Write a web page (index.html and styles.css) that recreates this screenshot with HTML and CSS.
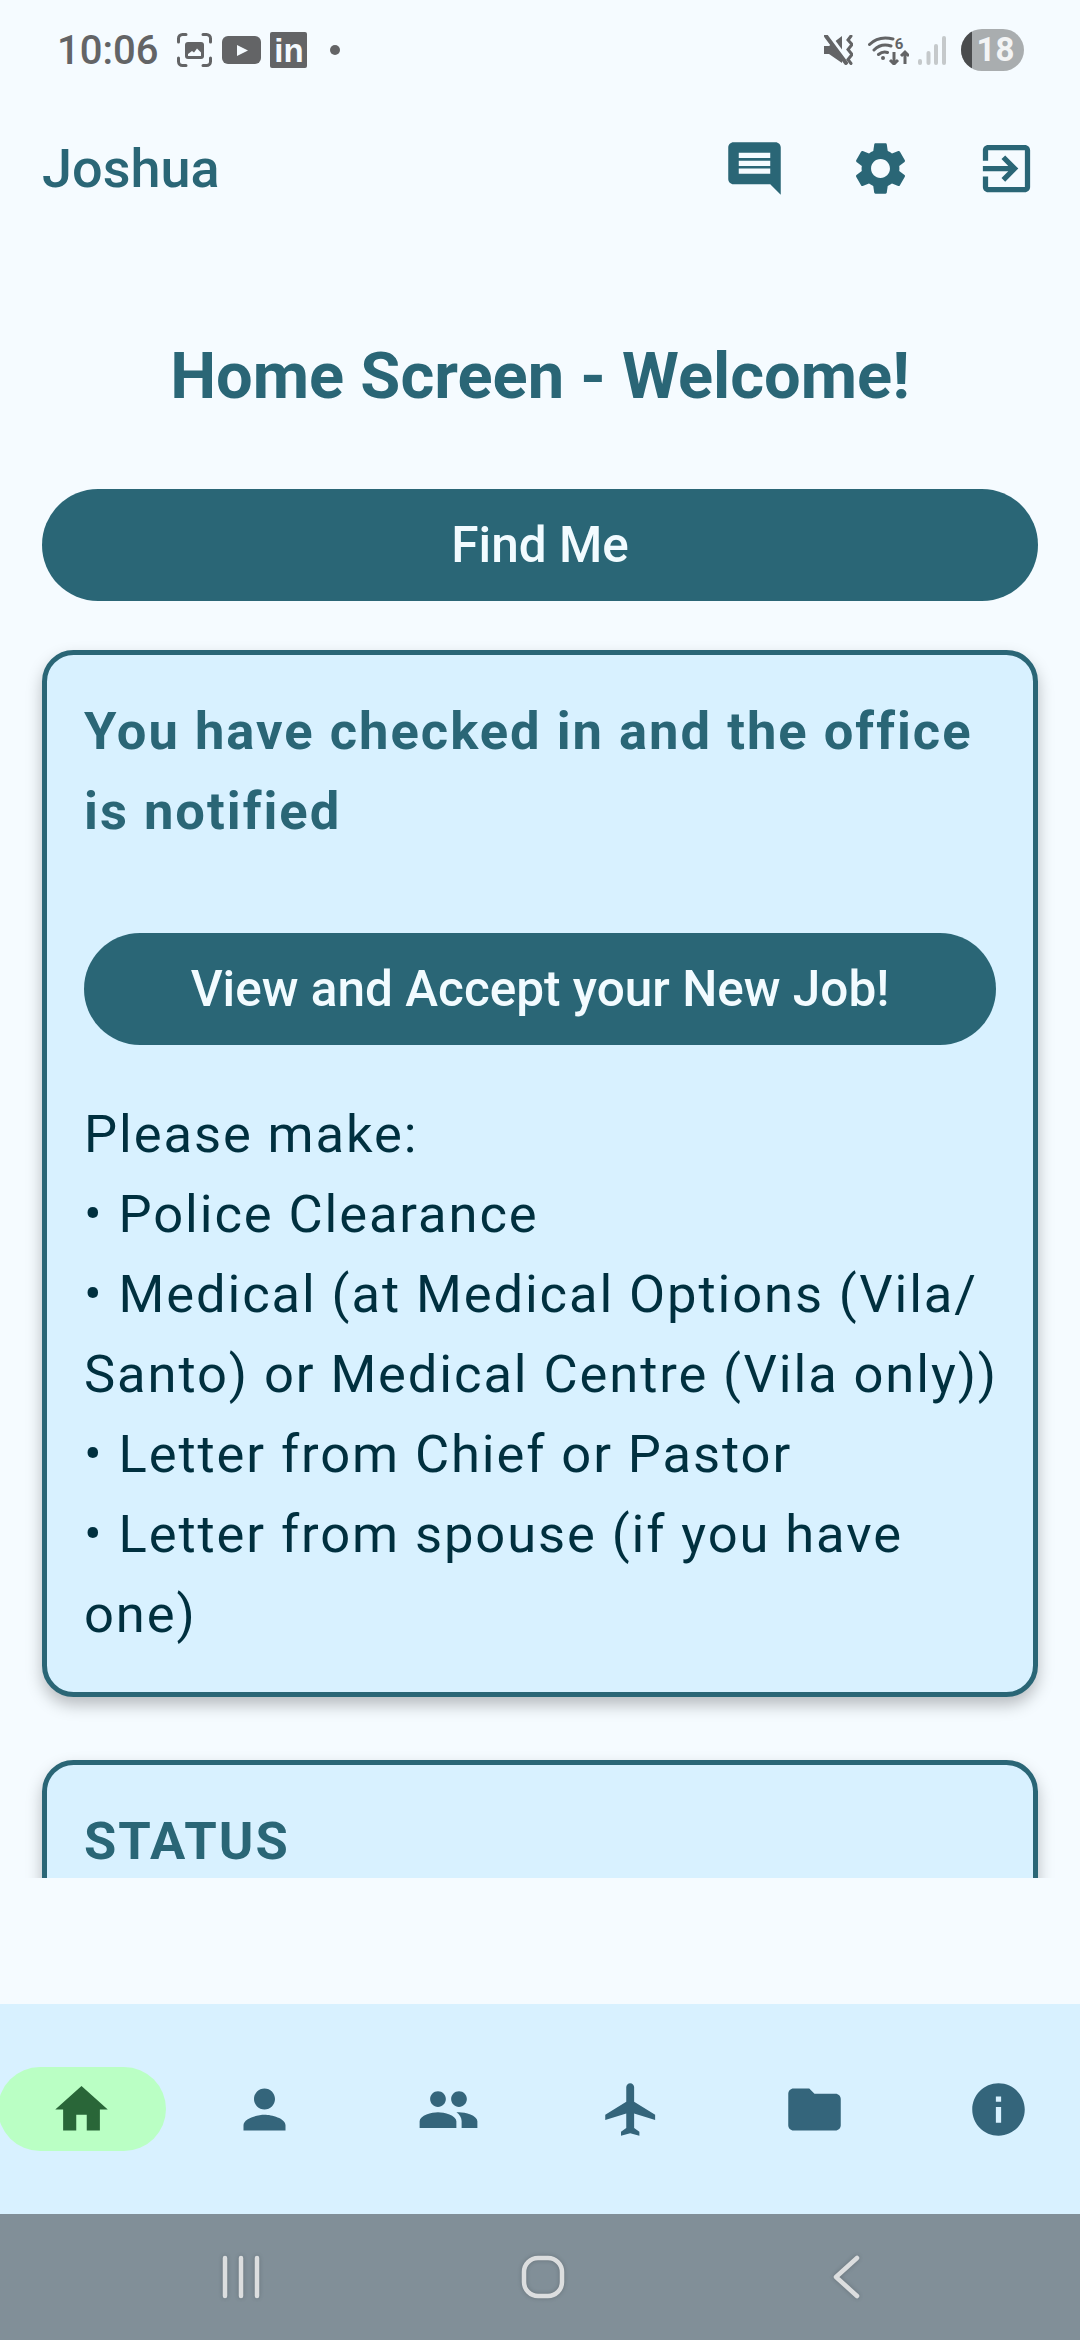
FILE: index.html
```html
<!DOCTYPE html>
<html lang="en">
<head>
    <meta charset="UTF-8">
    <meta name="viewport" content="width=device-width, initial-scale=1.0">
    <title>Home Screen</title>
    <link rel="stylesheet" href="styles.css">
</head>
<body>
<div class="page">

    <!-- status bar -->
    <div class="status-bar">
        <div class="status-left">
            <span class="clock">10:06</span>
            <svg class="st-shot" width="35" height="34" viewBox="0 0 35 34">
                <path class="corner" d="M1.500 9V5.500a4 4 0 0 1 4-4H9M26 1.500h3.500a4 4 0 0 1 4 4V9M33.500 25v3.500a4 4 0 0 1-4 4H26M9 32.500H5.500a4 4 0 0 1-4-4V25"/>
                <rect class="solid" x="8" y="9" width="19" height="17" rx="3"/>
                <path class="cut" d="M11 23v-2l4-3 2 1.500 3-4 4 4V23z"/>
            </svg>
            <svg class="st-yt" width="39" height="28" viewBox="0 0 39 28">
                <rect class="solid" width="39" height="28" rx="6"/>
                <polygon class="cut" points="15,9 26,14.500 15,20"/>
            </svg>
            <span class="st-in">in</span>
            <span class="st-dot"></span>
        </div>
        <div class="status-right">
            <svg class="st-mute" width="29" height="30" viewBox="0 0 29 30">
                <path class="solid" d="M0 11h5L18 1v27L5 19H0z"/>
                <path class="slash-gap" d="M1 1l20 27"/>
                <path class="slash" d="M2 1l20 27"/>
                <path class="corner" d="M27 1l-3 4 4 4.500-4 5 4 5-4 5 3 4"/>
            </svg>
            <svg class="st-wifi" width="41" height="30" viewBox="0 0 41 30">
                <path class="wifi-arc" d="M1.500 9.500C8 3 17 2 25 4M6 15c5-5 11-6 17-4M10.500 19.500c3-2.500 6-3 9-2"/>
                <circle class="solid" cx="15" cy="23" r="2"/>
                <text class="wifi-six" x="31" y="14">6</text>
                <path class="wifi-arrow" d="M26 17v12M22 25l4 4 4-4M37 29V17M33 21l4-4 4 4"/>
            </svg>
            <svg class="st-signal" width="28" height="29" viewBox="0 0 28 29">
                <rect class="bar" x="0" y="23" width="4" height="6" rx="2"/>
                <rect class="bar" x="8.500" y="15" width="4" height="14" rx="2"/>
                <rect class="bar" x="16" y="8" width="4" height="21" rx="2"/>
                <rect class="bar" x="24" y="0" width="4" height="29" rx="2"/>
            </svg>
            <div class="battery">18</div>
        </div>
    </div>

    <!-- app bar -->
    <div class="app-bar">
        <span class="user-name">Joshua</span>
        <div class="app-actions">
            <svg class="icon" viewBox="0 0 24 24"><path d="M20 2H4c-1.100 0-2 .9-2 2v12c0 1.100.9 2 2 2h14l4 4V4c0-1.100-.9-2-2-2zm-2 12H6v-2h12v2zm0-3H6V9h12v2zm0-3H6V6h12v2z"/></svg>
            <svg class="icon" viewBox="0 0 24 24"><path d="M19.140 12.940c.04-.3.06-.61.06-.94 0-.32-.02-.64-.07-.94l2.030-1.580c.18-.14.23-.41.12-.61l-1.920-3.320c-.12-.22-.37-.29-.59-.22l-2.390.96c-.5-.38-1.030-.7-1.620-.94L14.400 2.810c-.04-.24-.24-.41-.48-.41h-3.840c-.24 0-.43.17-.47.41L9.250 5.350c-.59.24-1.130.57-1.620.94l-2.390-.96c-.22-.08-.47 0-.59.22L2.740 8.870c-.12.21-.08.47.12.61l2.030 1.580c-.05.3-.09.63-.09.94s.02.64.07.94l-2.030 1.580c-.18.14-.23.41-.12.61l1.920 3.320c.12.22.37.29.59.22l2.390-.96c.5.38 1.030.7 1.620.94l.36 2.540c.05.24.24.41.48.41h3.840c.24 0 .44-.17.47-.41l.36-2.540c.59-.24 1.130-.56 1.620-.94l2.390.96c.22.08.47 0 .59-.22l1.920-3.320c.12-.22.07-.47-.12-.61l-2.010-1.580zM12 15.600c-1.980 0-3.600-1.620-3.600-3.600s1.620-3.600 3.600-3.600 3.600 1.620 3.600 3.600-1.620 3.600-3.600 3.600z"/></svg>
            <svg class="icon" viewBox="0 0 24 24"><path d="M10.090 15.590L11.500 17l5-5-5-5-1.410 1.410L12.670 11H3v2h9.670l-2.580 2.590zM19 3H5c-1.110 0-2 .9-2 2v4h2V5h14v14H5v-4H3v4c0 1.100.89 2 2 2h14c1.100 0 2-.9 2-2V5c0-1.100-.9-2-2-2z"/></svg>
        </div>
    </div>

    <!-- scrolling content -->
    <div class="content">
        <h1 class="screen-title">Home Screen - Welcome!</h1>
        <button class="pill-btn find-btn">Find Me</button>

        <div class="card">
            <h2 class="card-heading">You have checked in and the office is notified</h2>
            <button class="pill-btn job-btn">View and Accept your New Job!</button>
            <p class="card-text">Please make:<br>• Police Clearance<br>• Medical (at Medical Options (Vila/<wbr>Santo) or Medical Centre (Vila only))<br>• Letter from Chief or Pastor<br>• Letter from spouse (if you have one)</p>
        </div>

        <div class="card">
            <h2 class="card-heading">STATUS</h2>
        </div>
    </div>

    <!-- bottom navigation -->
    <nav class="bottom-nav">
        <div class="nav-item active"><span class="nav-pill"><svg class="nav-icon" viewBox="0 0 24 24"><path d="M10 20v-6h4v6h5v-8h3L12 3 2 12h3v8z"/></svg></span></div>
        <div class="nav-item"><span class="nav-pill"><svg class="nav-icon" viewBox="0 0 24 24"><path d="M12 12c2.210 0 4-1.790 4-4s-1.790-4-4-4-4 1.790-4 4 1.790 4 4 4zm0 2c-2.670 0-8 1.340-8 4v2h16v-2c0-2.660-5.330-4-8-4z"/></svg></span></div>
        <div class="nav-item"><span class="nav-pill"><svg class="nav-icon" viewBox="0 0 24 24"><path d="M16 11c1.660 0 2.990-1.340 2.990-3S17.660 5 16 5c-1.660 0-3 1.340-3 3s1.340 3 3 3zm-8 0c1.660 0 2.990-1.340 2.990-3S9.660 5 8 5C6.340 5 5 6.340 5 8s1.340 3 3 3zm0 2c-2.330 0-7 1.170-7 3.500V19h14v-2.500c0-2.330-4.670-3.500-7-3.500zm8 0c-.29 0-.62.02-.97.05 1.160.84 1.970 1.970 1.970 3.450V19h6v-2.500c0-2.330-4.670-3.500-7-3.500z"/></svg></span></div>
        <div class="nav-item"><span class="nav-pill"><svg class="nav-icon" viewBox="0 0 24 24"><path d="M21 16v-2l-8-5V3.500c0-.83-.67-1.500-1.500-1.500S10 2.670 10 3.500V9l-8 5v2l8-2.500V19l-2 1.500V22l3.500-1 3.500 1v-1.500L13 19v-5.500l8 2.500z"/></svg></span></div>
        <div class="nav-item"><span class="nav-pill"><svg class="nav-icon" viewBox="0 0 24 24"><path d="M10 4H4c-1.100 0-1.990.9-1.990 2L2 18c0 1.100.9 2 2 2h16c1.100 0 2-.9 2-2V8c0-1.100-.9-2-2-2h-8l-2-2z"/></svg></span></div>
        <div class="nav-item"><span class="nav-pill"><svg class="nav-icon" viewBox="0 0 24 24"><path d="M12 2C6.480 2 2 6.480 2 12s4.480 10 10 10 10-4.480 10-10S17.520 2 12 2zm1 15h-2v-6h2v6zm0-8h-2V7h2v2z"/></svg></span></div>
    </nav>

    <!-- system navigation -->
    <div class="system-nav">
        <svg class="sys-icon" width="42" height="46" viewBox="0 0 42 46"><path d="M5 4v38M21 4v38M37 4v38"/></svg>
        <svg class="sys-icon" width="46" height="46" viewBox="0 0 46 46"><rect x="4" y="4" width="38" height="38" rx="14"/></svg>
        <svg class="sys-icon" width="34" height="46" viewBox="0 0 34 46"><path d="M28 4L7 23l21 19"/></svg>
    </div>

</div>
</body>
</html>
```

FILE: styles.css
```css
* {
    box-sizing: border-box;
}
html, body {
    margin: 0;
    background-color: #f5fbff;
    font-family: Roboto, "Noto Sans", sans-serif;
}
.page {
    width: 1080px;
    height: 2340px;
    display: flex;
    flex-direction: column;
    overflow: hidden;
}

/* status bar */
.status-bar {
    height: 100px;
    flex: none;
    display: flex;
    justify-content: space-between;
    align-items: center;
    padding: 0 56px 0 57px;
}
.status-left, .status-right {
    display: flex;
    align-items: center;
}
.clock {
    font-size: 40px;
    font-weight: 500;
    color: #636466;
}
.solid {
    fill: #636466;
}
.cut {
    fill: #f5fbff;
}
.corner {
    fill: none;
    stroke: #636466;
    stroke-width: 3;
    stroke-linecap: round;
}
.st-shot {
    margin-left: 19px;
}
.st-yt {
    margin-left: 10px;
}
.st-in {
    width: 37px;
    height: 36px;
    margin-left: 9px;
    border-radius: 2px;
    background-color: #636466;
    color: #f5fbff;
    font-family: "Liberation Sans", sans-serif;
    font-size: 33px;
    font-weight: 700;
    line-height: 38px;
    text-align: center;
}
.st-dot {
    width: 10px;
    height: 10px;
    margin-left: 23px;
    border-radius: 50%;
    background-color: #636466;
}
.slash {
    stroke: #636466;
    stroke-width: 4;
    stroke-linecap: round;
}
.slash-gap {
    stroke: #f5fbff;
    stroke-width: 4;
    transform: translate(3px, -2px);
}
.st-wifi {
    margin-left: 15px;
}
.wifi-arc {
    fill: none;
    stroke: #636466;
    stroke-width: 3;
    stroke-linecap: round;
}
.wifi-six {
    font-size: 15px;
    font-weight: 700;
    fill: #636466;
    text-anchor: middle;
}
.wifi-arrow {
    fill: none;
    stroke: #636466;
    stroke-width: 3;
}
.st-signal {
    margin-left: 9px;
}
.bar {
    fill: #c5c9cb;
}
.battery {
    position: relative;
    width: 63px;
    height: 42px;
    margin-left: 15px;
    padding-left: 6px;
    border-radius: 21px;
    background-color: #a9adaf;
    color: #f3f4f5;
    font-size: 33px;
    font-weight: 700;
    line-height: 42px;
    text-align: center;
    overflow: hidden;
}
.battery::before {
    content: "";
    position: absolute;
    left: 0;
    top: 0;
    width: 11px;
    height: 100%;
    background-color: #4a4c4e;
}

/* app bar */
.app-bar {
    height: 136px;
    flex: none;
    display: flex;
    justify-content: space-between;
    align-items: center;
    padding: 0 42px;
}
.user-name {
    font-size: 54px;
    font-weight: 500;
    color: #2a6676;
}
.app-actions {
    display: flex;
    gap: 63px;
}
.icon {
    width: 63px;
    height: 63px;
    fill: #2a6676;
}

/* content */
.content {
    flex: 1;
    min-height: 0;
    margin-bottom: 126px;
    padding: 98px 42px 0;
    overflow: hidden;
}
.screen-title {
    margin: 0 0 71px;
    font-size: 65px;
    font-weight: 700;
    line-height: 84px;
    text-align: center;
    color: #2a6676;
}
.pill-btn {
    display: block;
    width: 100%;
    height: 112px;
    border: none;
    border-radius: 56px;
    background-color: #2a6676;
    color: #f2fbff;
    font-family: inherit;
    font-size: 49.500px;
    font-weight: 500;
}
.find-btn {
    margin-bottom: 49px;
}
.job-btn {
    width: 912px;
    margin-bottom: 49px;
}
.card {
    margin-bottom: 63px;
    padding: 36px 20px 38px 37px;
    border: 5.250px solid #2a6676;
    border-radius: 31.500px;
    background-color: #d8f1ff;
    box-shadow: 0 8px 16px rgba(0,0,0,0.25);
}
.card-heading {
    margin: 0 0 82px;
    max-width: 912px;
    font-size: 52.500px;
    font-weight: 700;
    line-height: 80px;
    letter-spacing: 2px;
    color: #2a6676;
}
.card-text {
    margin: 0;
    font-size: 52.500px;
    line-height: 80px;
    letter-spacing: 1.900px;
    color: #00303f;
}

/* bottom navigation */
.bottom-nav {
    height: 210px;
    flex: none;
    display: grid;
    grid-template-columns: repeat(6, 1fr);
    width: 1100px;
    margin-left: -10px;
    align-items: center;
    background-color: #d8f1ff;
}
.nav-item {
    display: flex;
    justify-content: center;
}
.nav-pill {
    width: 168px;
    height: 84px;
    display: flex;
    justify-content: center;
    align-items: center;
    border-radius: 42px;
}
.nav-icon {
    width: 63px;
    height: 63px;
    fill: #34657b;
}
.active .nav-pill {
    background-color: #baffc4;
}
.active .nav-icon {
    fill: #296638;
}

/* system navigation */
.system-nav {
    height: 126px;
    flex: none;
    display: grid;
    grid-template-columns: 1fr 1fr 1fr;
    justify-items: center;
    align-items: center;
    padding: 0 83px 0 90px;
    background-color: #818f98;
}
.sys-icon {
    fill: none;
    stroke: #dcdedf;
    stroke-width: 4.500;
    stroke-linecap: round;
    stroke-linejoin: round;
    filter: drop-shadow(0 0 2px rgba(0,0,0,0.2));
}
```
